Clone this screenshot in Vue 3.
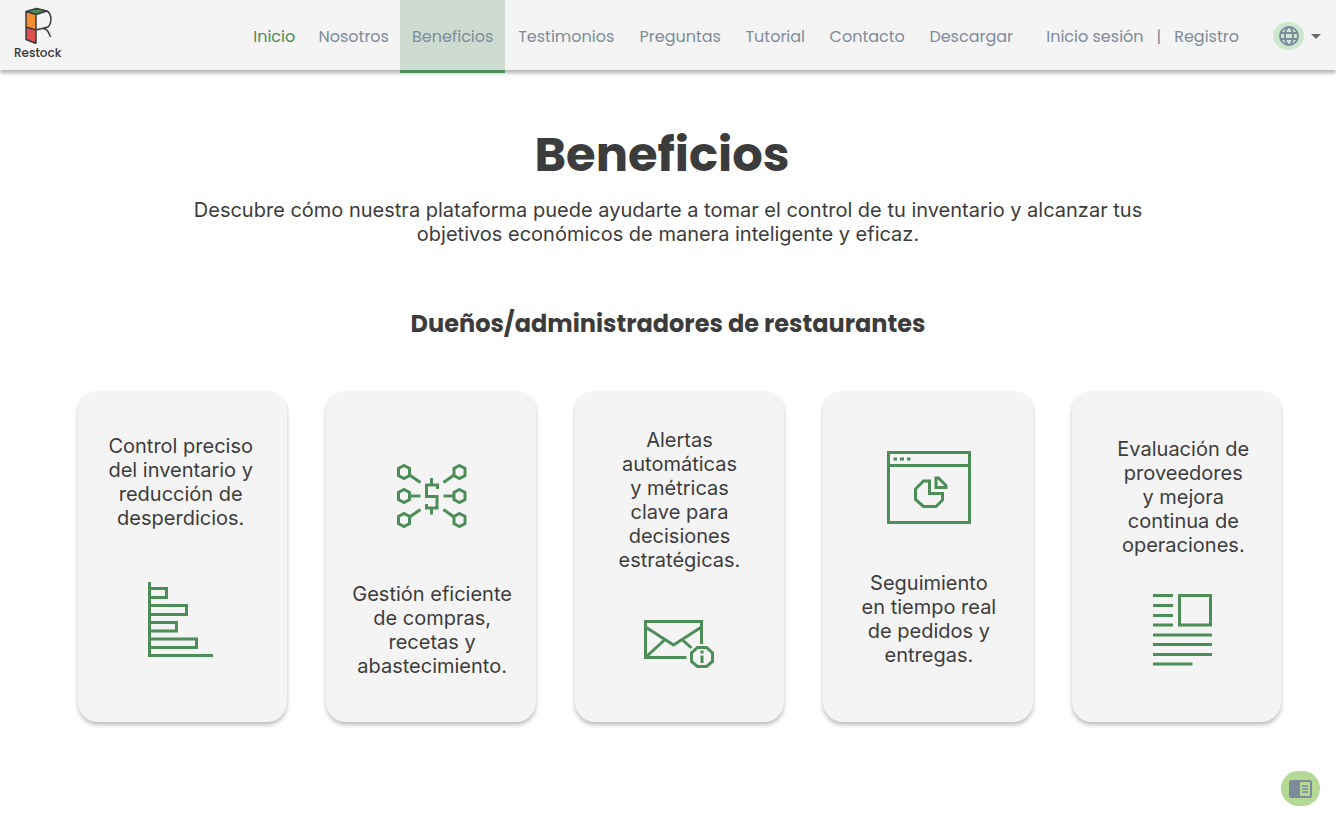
<script setup>
import { ref } from 'vue'

const links = ['Inicio', 'Nosotros', 'Beneficios', 'Testimonios', 'Preguntas', 'Tutorial', 'Contacto', 'Descargar']
const active = ref('Beneficios')
</script>

<template>
  <div class="page">
    <header class="bar">
      <a class="brand" href="#inicio">
        <svg class="logo" viewBox="0 0 32 40" aria-hidden="true">
          <path d="M4 5.500 14 9v15.500L4 21z" fill="#f68f33" />
          <path d="M4 21 14 24.500v13L4 33.500z" fill="#dc5050" />
          <path d="M4 5.500 14.500 2.500 25 5 14 8.500z" fill="#4c8d58" />
          <path
            d="M14 37.500 4 33.500V5.500L14.500 2.500 25 5C30 8 30 17 26 21L14 24 4 21M4 5.500 14 8.500 25 5M14 8.500V37.500M20 22.500C25 22 26.500 26 28.500 31"
            fill="none" stroke="#3a3a3a" stroke-width="1.500" stroke-linejoin="round"
          />
        </svg>
        <span>Restock</span>
      </a>

      <nav class="menu" aria-label="Principal">
        <a
          v-for="link in links"
          :key="link"
          :href="'#' + link.toLowerCase()"
          :class="{ home: link === 'Inicio', active: link === active }"
        >{{ link }}</a>
      </nav>

      <div class="account">
        <a href="#sesion">Inicio sesión</a>
        <span>|</span>
        <a href="#registro">Registro</a>
      </div>

      <button class="language" type="button" aria-label="Idioma">
        <span class="globe">
          <svg viewBox="0 0 20 20" aria-hidden="true">
            <g fill="none" stroke="#7d8b9a" stroke-width="2">
              <circle cx="10" cy="10" r="9" />
              <ellipse cx="10" cy="10" rx="4" ry="9" />
              <path d="M1.500 7h17M1.500 13h17" />
            </g>
          </svg>
        </span>
        <svg class="caret" viewBox="0 0 10 5" aria-hidden="true"><path d="M0 0h10L5 5z" fill="#6b6b6b" /></svg>
      </button>
    </header>

    <main>
      <h1>Beneficios</h1>
      <p class="lead">
        Descubre cómo nuestra plataforma puede ayudarte a tomar el control de tu inventario y alcanzar tus<br>
        objetivos económicos de manera inteligente y eficaz.
      </p>
      <h2>Dueños/administradores de restaurantes</h2>

      <section class="cards">
        <article class="card inventory">
          <p>Control preciso<br>del inventario y<br>reducción de<br>desperdicios.</p>
          <svg width="66" height="76" viewBox="0 0 66 76" aria-hidden="true">
            <path d="M1.500 0V73.500H65M1.500 6.500H18.500V15.500H1.500M1.500 23.500H38.500V32.500H1.500M1.500 40.500H28.500V49H1.500M1.500 57H48.500V65.500H1.500" />
          </svg>
        </article>

        <article class="card purchases">
          <svg width="70" height="64" viewBox="0 0 70 64" aria-hidden="true">
            <path d="M7 1.500 12.500 4.500V11.500L7 14.500 1.500 11.500V4.500zM7 25.500 12.500 28.500V35.500L7 38.500 1.500 35.500V28.500zM7 49.500 12.500 52.500V59.500L7 62.500 1.500 59.500V52.500z" />
            <path d="M62.500 1.500 68 4.500V11.500L62.500 14.500 57 11.500V4.500zM62.500 25.500 68 28.500V35.500L62.500 38.500 57 35.500V28.500zM62.500 49.500 68 52.500V59.500L62.500 62.500 57 59.500V52.500z" />
            <path d="M12.500 11 23.500 18.500M13 32H23.500M12.500 53 23.500 45.500M57 11 46.500 18.500M57 32H46.500M57 53 46.500 45.500" />
            <path d="M34.500 14V21M40.500 25V21H29.500V32.500H40V44H29.500V40M34.500 44V50.500" />
          </svg>
          <p>Gestión eficiente<br>de compras,<br>recetas y<br>abastecimiento.</p>
        </article>

        <article class="card alerts">
          <p>Alertas<br>automáticas<br>y métricas<br>clave para<br>decisiones<br>estratégicas.</p>
          <svg width="70" height="48" viewBox="0 0 70 48" aria-hidden="true">
            <path d="M42.500 37.500H1.500V1.500H57.500V24M1.500 7 29.500 25 57.500 7M2 37 21 19.500M38 19.500 47.500 28" />
            <path d="M53.500 27.500H62.500L68.500 33V41.500L62.500 46.500H53.500L47.500 41.500V33z" />
            <path d="M58 30.500V33.500M58 35.500V43" />
          </svg>
        </article>

        <article class="card tracking">
          <svg width="84" height="73" viewBox="0 0 84 73" aria-hidden="true">
            <path d="M1.500 1.500H82.500V71.500H1.500zM1.500 14.500H82.500M6.500 8H10M13 8H17M20 8H23.500" />
            <path d="M42.500 30H36.500L28.500 38V48.500L36.500 55.500H49L55.500 49V42.500H42.500zM49 27V36.500H59V34.500L51.500 27z" />
          </svg>
          <p>Seguimiento<br>en tiempo real<br>de pedidos y<br>entregas.</p>
        </article>

        <article class="card suppliers">
          <p>Evaluación de<br>proveedores<br>y mejora<br>continua de<br>operaciones.</p>
          <svg width="60" height="72" viewBox="0 0 60 72" aria-hidden="true">
            <path d="M0 1.500H20M0 11.500H20M0 21.500H20M0 31H20M26.500 1.500H57.500V31H26.500zM0 41H59M0 50.500H59M0 60.500H59M0 70H39.500" />
          </svg>
        </article>
      </section>
    </main>

    <button class="reader" type="button" aria-label="Modo de lectura">
      <svg width="24" height="18" viewBox="0 0 24 18" aria-hidden="true">
        <rect x="1" y="1" width="21" height="16" rx="1.500" fill="none" stroke="#7d8b9a" stroke-width="2" />
        <path d="M1 1H11V17H1z" fill="#7d8b9a" />
        <path d="M13 6H19M13 9H19M13 12H19" stroke="#7d8b9a" stroke-width="1.500" />
      </svg>
    </button>
  </div>
</template>

<style>
body {
  margin: 0;
  background: #fff;
}
</style>

<style scoped>
.page {
  min-height: 100vh;
  color: #3c3c3c;
  font-family: Inter, sans-serif;
}

a {
  color: inherit;
  text-decoration: none;
}

button {
  padding: 0;
  border: 0;
  background: none;
  cursor: pointer;
}

.bar {
  display: flex;
  align-items: flex-start;
  height: 70px;
  background: #f4f4f4;
  box-shadow: 0 3px 4px rgba(0, 0, 0, 0.3);
  color: #7f8c9b;
  font-family: Poppins, Inter, sans-serif;
  font-size: 16px;
  line-height: 73px;
}

.brand {
  display: flex;
  flex-direction: column;
  align-items: center;
  margin: 6px auto 0 14px;
  color: #3a3a3a;
  font-size: 12px;
  font-weight: 500;
  line-height: 14px;
}

.logo {
  width: 32px;
  height: 40px;
}

.menu {
  display: grid;
  grid-template-columns: 66px 93px 105px 122px 106px 84px 100px 108px;
  text-align: center;
}

.menu .home {
  color: #4c8d58;
}

.menu .active {
  height: 70px;
  border-bottom: 3px solid #4c8d58;
  background: #cddbd0;
}

.account {
  display: flex;
  gap: 13px;
  margin: 0 34px 0 21px;
}

.language {
  display: flex;
  align-items: center;
  gap: 7px;
  margin: 22px 15px 0 0;
}

.globe {
  display: grid;
  place-items: center;
  width: 31px;
  height: 28px;
  border-radius: 50%;
  background: #cde8d1;
}

.globe svg {
  width: 20px;
  height: 20px;
}

.caret {
  width: 10px;
  height: 5px;
}

main {
  padding-top: 55px;
  text-align: center;
}

h1 {
  margin: 0;
  padding-right: 12px;
  font-family: Poppins, Inter, sans-serif;
  font-size: 48px;
  font-weight: 700;
  line-height: 60px;
}

.lead {
  margin: 13px 0 0;
  font-size: 20px;
  line-height: 24px;
}

h2 {
  margin: 63px 0 0;
  font-family: Poppins, Inter, sans-serif;
  font-size: 24px;
  font-weight: 700;
  line-height: 30px;
}

.cards {
  display: grid;
  grid-template-columns: repeat(5, 1fr);
  gap: 39px;
  margin: 52px 55px 0 78px;
}

.card {
  display: flex;
  flex-direction: column;
  align-items: center;
  box-sizing: border-box;
  min-height: 331px;
  border-radius: 20px;
  background: #f4f4f4;
  box-shadow: 0 3px 4px rgba(0, 0, 0, 0.25);
  font-size: 20px;
  line-height: 24px;
}

.card p {
  margin: 0;
}

.card svg {
  fill: none;
  stroke: #4c8d58;
  stroke-width: 3;
}

.inventory {
  gap: 52px;
  padding: 43px 4px 0 0;
}

.purchases {
  gap: 54px;
  padding: 73px 0 0 2px;
}

.alerts {
  gap: 48px;
  padding-top: 37px;
}

.tracking {
  gap: 47px;
  padding: 60px 0 0 2px;
}

.suppliers {
  gap: 37px;
  padding: 46px 0 0 14px;
}

.reader {
  position: fixed;
  right: 16px;
  bottom: 22px;
  display: grid;
  place-items: center;
  width: 39px;
  height: 35px;
  border-radius: 18px;
  background: #b3d995;
}
</style>
